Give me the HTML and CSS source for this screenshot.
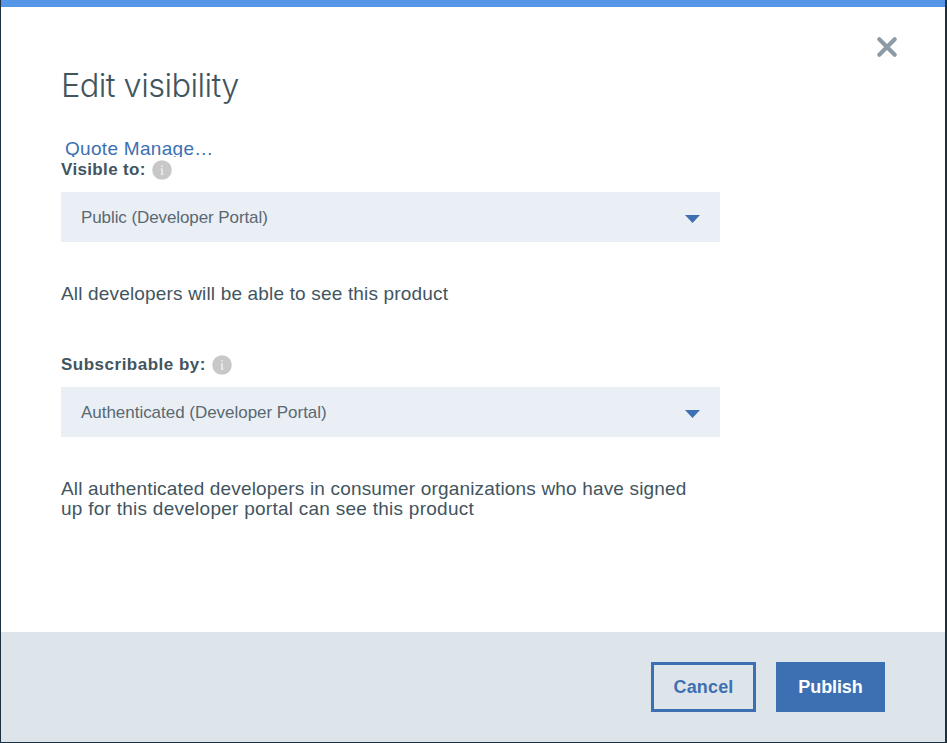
FILE: index.html
```html
<!DOCTYPE html>
<html lang="en">
<head>
<meta charset="utf-8">
<title>Edit visibility</title>
<link rel="stylesheet" href="styles.css">
</head>
<body>
<div class="modal" role="dialog" aria-labelledby="title">
  <main class="content">
    <button class="close" aria-label="Close">
      <svg width="22" height="22" viewBox="0 0 22 22"><path d="M3.3 3.3L18.7 18.7M18.7 3.3L3.3 18.7"/></svg>
    </button>
    <h1 class="title" id="title">Edit visibility</h1>
    <div class="product"><a class="product-link">Quote Manage…</a></div>
    <section class="field">
      <div class="label"><span class="label-visible">Visible to:</span>
        <svg class="info" viewBox="0 0 20 20"><circle cx="10" cy="10" r="9.8"/><path d="M9.2 5.2h1.6v1.6H9.2zM8.6 8.4h2.2v5.4h.6v.9H8.8v-.9h.6V9.3h-.8z"/></svg>
      </div>
      <div class="select"><span class="value-public">Public (Developer Portal)</span><svg class="caret" viewBox="0 0 15 8"><path d="M0 0H15L7.5 8z"/></svg></div>
      <p class="help">All developers will be able to see this product</p>
    </section>
    <section class="field">
      <div class="label"><span class="label-subscribe">Subscribable by:</span>
        <svg class="info" viewBox="0 0 20 20"><circle cx="10" cy="10" r="9.8"/><path d="M9.2 5.2h1.6v1.6H9.2zM8.6 8.4h2.2v5.4h.6v.9H8.8v-.9h.6V9.3h-.8z"/></svg>
      </div>
      <div class="select"><span class="value-auth">Authenticated (Developer Portal)</span><svg class="caret" viewBox="0 0 15 8"><path d="M0 0H15L7.5 8z"/></svg></div>
      <p class="help">All authenticated developers in consumer organizations who have signed<br><span class="help-two">up for this developer portal can see this product</span></p>
    </section>
  </main>
  <footer class="footer">
    <button class="button cancel">Cancel</button>
    <button class="button publish">Publish</button>
  </footer>
</div>
</body>
</html>
```
FILE: styles.css
```css
* { box-sizing: border-box; }
body {
  margin: 0;
  font-family: "Liberation Sans", Arial, sans-serif;
  color: #42555f;
}
.modal {
  display: flex;
  flex-direction: column;
  width: 947px;
  height: 743px;
  border: solid #1d3040;
  border-width: 0 2px 1px 1px;
  background: #fff;
}
.content {
  position: relative;
  flex: 1;
  border-top: 7px solid #5596e6;
  padding: 58px 60px 0;
}
.close {
  position: absolute;
  top: 29px;
  right: 47px;
  width: 22px;
  height: 22px;
  padding: 0;
  border: 0;
  background: none;
}
.close svg { display: block; }
.close path { stroke: #8c9ba5; stroke-width: 4.2; stroke-linecap: round; fill: none; }
.title {
  margin: 0;
  height: 40px;
  font: 300 32.6px/40px Inter, sans-serif;
  letter-spacing: -0.58px;
}
.product { height: 52px; padding: 33px 0 0 4px; }
.product-link {
  display: block;
  height: 19px;
  overflow: hidden;
  font-size: 19px;
  line-height: 22px;
  letter-spacing: 0.3px;
  color: #3d70b2;
}
.label {
  display: flex;
  align-items: center;
  height: 24px;
  font-size: 17px;
  font-weight: 700;
  line-height: 24px;
}
.label span { padding-top: 1px; }
.label-visible { letter-spacing: 0.36px; }
.label-subscribe { letter-spacing: 0.5px; }
.info { width: 20px; height: 20px; margin: 2px 0 0 6px; }
.info circle { fill: #c8c8c8; }
.info path { fill: #f2f2f2; }
.select {
  display: flex;
  align-items: center;
  justify-content: space-between;
  width: 659px;
  height: 50px;
  margin-top: 11px;
  padding: 0 20px;
  background: #eaeff6;
  color: #5a6872;
  font-size: 17px;
}
.select span { padding-top: 1px; }
.value-public { letter-spacing: -0.09px; }
.value-auth { letter-spacing: -0.03px; }
.caret { width: 15px; height: 8px; margin-top: 4px; fill: #3d70b2; }
.help {
  height: 69px;
  margin: 42px 0 -1px;
  font-size: 19px;
  line-height: 20px;
  letter-spacing: 0.17px;
  white-space: nowrap;
}
.help-two { letter-spacing: 0.26px; }
.footer {
  display: flex;
  justify-content: flex-end;
  gap: 20px;
  height: 110px;
  padding: 30px 60px 0 0;
  background: #dee5ea;
}
.button {
  height: 50px;
  padding: 0;
  border: 3px solid #3d70b2;
  border-radius: 0;
  font: 700 18px "Liberation Sans", Arial, sans-serif;
}
.cancel { width: 105px; background: transparent; color: #3d70b2; letter-spacing: 0.15px; }
.publish { width: 109px; background: #3d70b2; color: #fff; letter-spacing: -0.1px; }
```
